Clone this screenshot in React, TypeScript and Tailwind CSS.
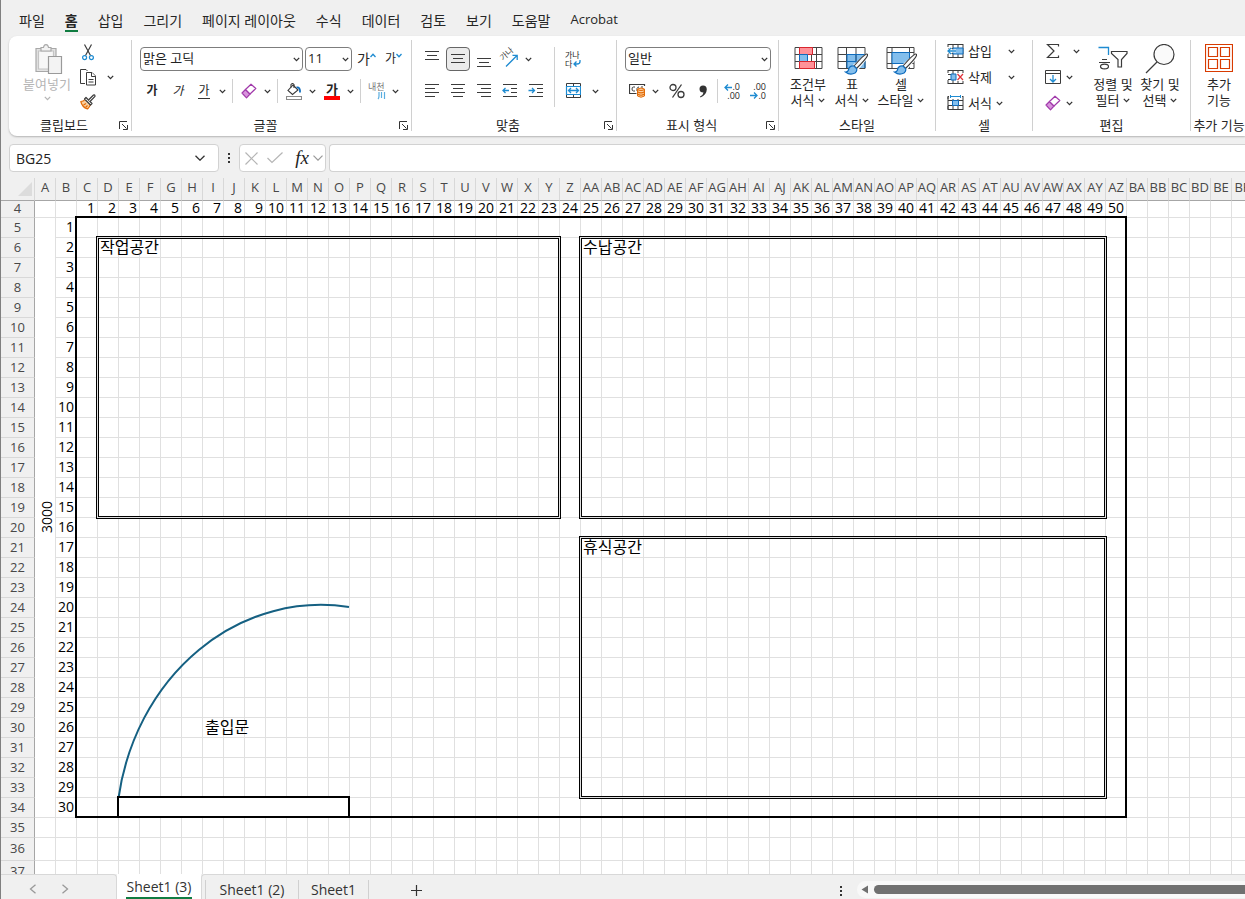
import React from "react";

type Kids = { children?: React.ReactNode };

const INK = "#3b3b3b";
const BLUE = "#1e8bd1";

function Chevron({ className = "text-[#333]" }: { className?: string }) {
  return (
    <svg width="7" height="5" viewBox="0 0 7 5" className={"shrink-0 " + className} fill="none" stroke="currentColor" strokeWidth="1.3">
      <path d="M0.8 0.9 3.5 3.6 6.2 0.9" />
    </svg>
  );
}

function More({ label }: { label: string }) {
  return (
    <button aria-label={label} className="flex h-6 w-3 shrink-0 items-center justify-center">
      <Chevron />
    </button>
  );
}

function Tool({ label, active, children }: Kids & { label: string; active?: boolean }) {
  return (
    <button
      aria-label={label}
      className={
        active
          ? "flex h-6 w-6 shrink-0 items-center justify-center rounded border border-[#666] bg-[#ebebeb]"
          : "flex h-6 w-6 shrink-0 items-center justify-center"
      }
    >
      {children}
    </button>
  );
}

function Rule() {
  return <span className="mx-1 h-6 w-px shrink-0 bg-[#d0d0d0]" />;
}

function Group({ title, launcher, className, children }: Kids & { title: string; launcher?: boolean; className: string }) {
  return (
    <section className={"flex shrink-0 flex-col border-r border-[#d0d0d0] " + className}>
      <div className="flex flex-1">{children}</div>
      <div className="flex h-3 items-center">
        <h2 className="flex-1 text-center text-[13px] leading-3 whitespace-nowrap">{title}</h2>
        {launcher && (
          <button aria-label={title + " 설정"} className="mr-[3px] h-[9px] w-[9px]">
            <svg width="9" height="9" viewBox="0 0 9 9" fill="none" stroke="#333">
              <path d="M0.5 8V0.5H8M3 3l4.5 4.5M8.5 4v4.5H4" />
            </svg>
          </button>
        )}
      </div>
    </section>
  );
}

function BigButton({ icon, lines, className, more }: { icon: React.ReactNode; lines: string[]; className: string; more?: boolean }) {
  return (
    <button className={"flex flex-col items-center pt-1 text-[13px] leading-4 whitespace-nowrap " + className}>
      <span className="flex h-8 items-start justify-center">{icon}</span>
      <span>{lines[0]}</span>
      <span className="flex items-center gap-1">
        {lines[1]}
        {more && <Chevron />}
      </span>
    </button>
  );
}

function Lines({ rows }: { rows: [number, number, number][] }) {
  return (
    <svg width="16" height="16" viewBox="0 0 16 16" stroke={INK} strokeWidth="1">
      {rows.map(([x1, x2, y]) => (
        <path key={y} d={`M${x1} ${y + 0.5}H${x2}`} />
      ))}
    </svg>
  );
}

function Eraser() {
  return (
    <svg width="16" height="16" viewBox="0 0 16 16" fill="none" stroke="#a23bab" strokeWidth="1.2" strokeLinejoin="round">
      <path d="M1 10 4.5 6.5 9 11 5.5 14.8Z" fill="#d894dc" />
      <path d="M4.5 6.5 10 1.2 14.8 5.5 9 11Z" fill="#fff" />
    </svg>
  );
}

function Brush() {
  return (
    <>
      <path d="M30 8.500 L17 20 L20 23 L30.500 10Z" fill="#fff" stroke="#fff" strokeWidth="3" />
      <path d="M29.500 8 Q27 8.500 17 20 L19.500 22.500 Q29.500 12.500 30.500 9.500 Q30.800 7.800 29.500 8Z" fill="#fafafa" stroke={INK} strokeWidth="1.1" />
      <path d="M17 20Q12 19.500 11.500 24 Q11 26 8.500 26Q13 29.500 18 27Q20.500 25 19.500 22.500Z" fill="#83beec" stroke="#0f6cbd" strokeWidth="1.2" />
    </>
  );
}

function Cut() {
  return (
    <svg width="12" height="17" viewBox="0 0 12 17" fill="none" stroke={INK} strokeWidth="1.2">
      <path d="M2.500 0.500 8.500 11.500M9.500 0.500 3.500 11.500" />
      <circle cx="2.600" cy="13.600" r="2" stroke={BLUE} />
      <circle cx="9.400" cy="13.600" r="2" stroke={BLUE} />
    </svg>
  );
}

function Copy() {
  return (
    <svg width="16" height="17" viewBox="0 0 16 17" fill="#fff" stroke={INK} strokeWidth="1">
      <path d="M5 14.500H0.500V0.500H6L7.500 2" />
      <path d="M6.500 3.500H12L15.500 7V16H6.500Z" />
      <path d="M11.500 3.500V7.500H15.500M8.500 10.500h5M8.500 13h5" />
    </svg>
  );
}

function FormatBrush() {
  return (
    <svg width="16" height="16" viewBox="0 0 16 16" fill="none" strokeWidth="1.2" strokeLinejoin="round">
      <path d="M5 5.500 Q3.500 7.500 0.800 7.500 Q2 13 7.500 15 Q9.500 13 10.500 10.500" fill="#fbd0a0" stroke="#e36c09" />
      <path d="M3.500 11 6 9.500M5.500 13.500l2-2" stroke="#e36c09" />
      <path d="M6 3.500 12 9.500 10.500 11 4.500 5Z" fill="#fff" stroke={INK} />
      <path d="M8.500 6 13.500 1Q15 0.500 15 2.300L10 7.500" fill="#fff" stroke={INK} />
    </svg>
  );
}

function Paste() {
  return (
    <svg width="28" height="31" viewBox="0 0 28 31" strokeWidth="1.200">
      <path d="M1 4.500H21V27.500H1Z" fill="#e3e3e3" stroke="#a8a8a8" />
      <path d="M3.500 7H18.500V25H3.500Z" fill="#f7f7f7" stroke="#c4c4c4" />
      <path d="M6 7V3.500H8.500Q9 0.600 11 0.600T13.500 3.500H16V7Z" fill="#f3f3f3" stroke="#a8a8a8" />
      <path d="M13.500 12.500H26.500V29.500H13.500Z" fill="#f3f3f3" stroke="#9a9a9a" />
    </svg>
  );
}

function Bucket() {
  return (
    <svg width="16" height="17" viewBox="0 0 16 17" fill="none" strokeWidth="1.100">
      <path d="M7 2 12 7 6.500 11.500 2 7.500Z" fill="#fff" stroke={INK} />
      <path d="M5 4.500V1.500Q6.500-0.500 8 1.500V5" stroke={INK} />
      <path d="M10.500 4.500Q14.500 4 14 9.500" stroke="#0f6cbd" strokeWidth="1.800" />
      <path d="M0.500 13.500H15.500V16.500H0.500Z" fill="#fff" stroke="#8a8a8a" />
    </svg>
  );
}

function Orientation() {
  return (
    <svg width="18" height="18" viewBox="0 0 18 18" fill="none" className="overflow-visible">
      <text x="0" y="0" transform="translate(2 11) rotate(-42)" fontSize="8" fill={INK}>가나</text>
      <path d="M5 16.500 16 5.500M11.500 5.300H16.200V10" stroke={BLUE} strokeWidth="1.300" />
    </svg>
  );
}

function Indent({ right }: { right?: boolean }) {
  return (
    <svg width="16" height="16" viewBox="0 0 16 16" fill="none">
      <path d="M1 1.500H15M9 5.500H15M9 9.500H15M1 13.500H15" stroke={INK} />
      <path d={right ? "M0.500 7.500H6.500M4 5 6.500 7.500 4 10" : "M7 7.500H1M3.500 5 1 7.500 3.500 10"} stroke={BLUE} strokeWidth="1.300" />
    </svg>
  );
}

function Merge() {
  return (
    <svg width="16" height="16" viewBox="0 0 16 16" fill="none">
      <path d="M1.500 0.500H15.500V14.500H1.500ZM8.500 0.500V3M8.500 12V14.500" stroke={INK} />
      <path d="M1.500 3.500H15.500V11.500H1.500Z" fill="#fff" stroke={BLUE} strokeWidth="1.200" />
      <path d="M4 7.500H13M6 5 3.500 7.500 6 10M11 5 13.500 7.500 11 10" stroke={BLUE} strokeWidth="1.300" />
    </svg>
  );
}

function Currency() {
  return (
    <svg width="17" height="16" viewBox="0 0 17 16" fill="none">
      <path d="M15.500 3V1.500H0.500V10.500H7.500" stroke={INK} strokeWidth="1.200" />
      <path d="M6 4H4.500Q3 4 3 6T4.500 8H6M8 8V5.500Q8.500 4 10 4M12 4H14" stroke={INK} />
      <path d="M8.500 6Q12 4 15.500 6V13Q12 15.500 8.500 13Z" fill="#fbd0a0" stroke="#e36c09" />
      <path d="M8.500 6.500Q12 8.500 15.500 6.500M8.500 8.800Q12 11 15.500 8.800M8.500 11Q12 13.500 15.500 11" stroke="#e36c09" strokeWidth="1.100" />
    </svg>
  );
}

function Decimals({ less }: { less?: boolean }) {
  return (
    <span className="relative flex w-4 flex-col items-end text-[9px] leading-[9px]">
      <span>{less ? ".00" : ".0"}</span>
      <span>{less ? ".0" : ".00"}</span>
      <svg
        width="8"
        height="7"
        viewBox="0 0 8 7"
        fill="none"
        stroke={BLUE}
        strokeWidth="1.300"
        className={less ? "absolute bottom-px left-0" : "absolute top-0.5 left-0"}
      >
        <path d={less ? "M0 3.500H7M4 0.500 7 3.500 4 6.500" : "M8 3.500H1M4 0.500 1 3.500 4 6.500"} />
      </svg>
    </span>
  );
}

function Conditional() {
  return (
    <svg width="29" height="24" viewBox="0 0 29 24" fill="none">
      <path d="M1 1.500H28V22.500H1ZM1 8.500H28M1 15.500H28M6.500 1V22M22.500 1V22M17.500 1V22" stroke="#444" />
      <path d="M5.500 1.500H18.500V8.500H5.500Z" fill="#ff9299" stroke="#d8262e" />
      <path d="M5.500 8.500H13.500V15.500H5.500Z" fill="#83beec" stroke="#0f6cbd" />
      <path d="M5.500 15.500H20.500V22.500H5.500Z" fill="#ff9299" stroke="#d8262e" />
    </svg>
  );
}

function TableStyle() {
  return (
    <svg width="32" height="29" viewBox="0 0 32 29" fill="none">
      <path d="M10 8.500H28V22H10Z" fill="#83beec" />
      <path d="M1 1.500H28V22.500H1ZM1 8.500H28M1 15.500H28M9.500 1V22M19 1V22" stroke="#444" />
      <path d="M10 8.500H28M10 15.500H28M10 8V22M19 8V22M28 8V22" stroke="#0f6cbd" />
      <Brush />
    </svg>
  );
}

function CellStyle() {
  return (
    <svg width="32" height="29" viewBox="0 0 32 29" fill="none">
      <path d="M1 1.500H28V22.500H1ZM1 6.500H28M1 17.500H28M6 1V22M23.500 1V22" stroke="#444" />
      <path d="M6 6.500H23.500V17.500H6Z" fill="#83beec" stroke="#0f6cbd" />
      <Brush />
    </svg>
  );
}

function CellIcon({ kind }: { kind: "insert" | "delete" | "format" }) {
  return (
    <svg width="17" height="16" viewBox="0 0 17 16" fill="none">
      <path d="M1 1.500H16M1 14.500H16M1 1V4M16 1V15M1 11V15M6 1V15M11 1V15M1 5.500H16M1 10.500H16" stroke={INK} />
      {kind === "insert" && (
        <>
          <path d="M6 5H16V11H6Z" fill="#83beec" stroke="#0f6cbd" />
          <path d="M9 8H1M4 5 1 8 4 11" stroke="#fff" strokeWidth="3" />
          <path d="M9 8H1M4 5 1 8 4 11" stroke={BLUE} strokeWidth="1.300" />
        </>
      )}
      {kind === "delete" && (
        <>
          <path d="M9 4H17V12H9Z" fill="#fff" />
          <path d="M4 5H9V11H4Z" fill="#83beec" stroke="#0f6cbd" />
          <path d="M10.500 5 16 11M16 5 10.500 11" stroke="#e0323a" strokeWidth="1.200" />
        </>
      )}
      {kind === "format" && (
        <>
          <path d="M2 0H15V4H2Z" fill="#fff" />
          <path d="M5.500 5.500H11.500V10.500H5.500Z" fill="#83beec" stroke="#0f6cbd" />
          <path d="M3.500 1.500H13.500M3.500 0V3M13.500 0V3" stroke={BLUE} />
          <path d="M1 2V14" stroke={INK} />
        </>
      )}
    </svg>
  );
}

function CellCommand({ kind, label, wide }: { kind: "insert" | "delete" | "format"; label: string; wide?: boolean }) {
  return (
    <button className="flex h-[22px] items-center text-[13px] leading-4">
      <CellIcon kind={kind} />
      <span className="ml-1 whitespace-nowrap">{label}</span>
      <Chevron className={wide ? "ml-4 text-[#333]" : "ml-1 text-[#333]"} />
    </button>
  );
}

function Picker({ label, value, className }: { label: string; value: string; className: string }) {
  return (
    <div className={"relative flex h-6 items-center " + className}>
      <select
        aria-label={label}
        defaultValue={value}
        className="h-6 w-full appearance-none rounded border border-[#7d7d7d] bg-white pb-0.5 pl-0.5 text-[13px] leading-5 text-[#222]"
      >
        <option>{value}</option>
      </select>
      <span className="pointer-events-none absolute right-[3px] flex">
        <Chevron />
      </span>
    </div>
  );
}

const menu = ["파일", "홈", "삽입", "그리기", "페이지 레이아웃", "수식", "데이터", "검토", "보기", "도움말", "Acrobat"];

function Menu() {
  return (
    <nav className="flex h-9 shrink-0 items-center gap-5 pt-1 pl-[18px] text-[14px] whitespace-nowrap">
      {menu.map((name) => (
        <a
          key={name}
          href="#"
          className={
            name === "홈"
              ? "flex h-6 items-center border-b-2 border-[#107c41] pt-0.5 font-bold"
              : name === "Acrobat"
                ? "flex h-6 items-center text-[13px]"
                : "flex h-6 items-center"
          }
        >
          {name}
        </a>
      ))}
    </nav>
  );
}

function Ribbon() {
  return (
    <div className="ml-2 flex h-[100px] shrink-0 overflow-hidden rounded-l-lg bg-white pt-1 pb-[5px] shadow-[0_1px_2px_rgba(0,0,0,0.25)]">
      <Group title="클립보드" launcher className="w-[123px]">
        <button className="ml-[11px] flex w-[54px] flex-col items-center pt-1 text-[13px] leading-4 whitespace-nowrap text-[#b5b5b5]">
          <span className="flex h-8 pl-1"><Paste /></span>
          붙여넣기
          <span className="flex h-3 items-center"><Chevron className="text-[#b5b5b5]" /></span>
        </button>
        <div className="ml-0.5 flex flex-col gap-px">
          <Tool label="잘라내기"><Cut /></Tool>
          <div className="flex gap-1">
            <Tool label="복사"><Copy /></Tool>
            <More label="복사 옵션" />
          </div>
          <Tool label="서식 복사"><FormatBrush /></Tool>
        </div>
      </Group>

      <Group title="글꼴" launcher className="w-[280px]">
        <div className="flex flex-col gap-2 pt-[7px] pl-2">
          <div className="flex">
            <Picker label="글꼴" value="맑은 고딕" className="w-[163px]" />
            <Picker label="글꼴 크기" value="11" className="ml-0.5 w-[47px]" />
            <button aria-label="글꼴 크기 크게" className="ml-[5px] flex h-6 w-5 items-start pt-0.5 text-[14px] leading-5">
              가
              <svg width="6" height="5" viewBox="0 0 6 5" fill="none" stroke={BLUE} strokeWidth="1.300" className="mt-1"><path d="M0.500 4 3 1.300 5.500 4" /></svg>
            </button>
            <button aria-label="글꼴 크기 작게" className="ml-2 flex h-6 w-5 items-start pt-0.5 text-[12px] leading-5">
              가
              <svg width="6" height="5" viewBox="0 0 6 5" fill="none" stroke={BLUE} strokeWidth="1.300" className="mt-1"><path d="M0.500 1 3 3.700 5.500 1" /></svg>
            </button>
          </div>
          <div className="flex items-center">
            <Tool label="굵게"><span className="text-[12px] leading-4 font-bold">가</span></Tool>
            <span className="w-0.5" />
            <Tool label="기울임꼴"><span className="text-[12px] leading-4 italic">가</span></Tool>
            <span className="w-0.5" />
            <Tool label="밑줄"><span className="border-b border-[#333] text-[12px] leading-[14px]">가</span></Tool>
            <More label="밑줄 옵션" />
            <Rule />
            <Tool label="지우기"><Eraser /></Tool>
            <More label="지우기 옵션" />
            <Rule />
            <Tool label="채우기 색"><Bucket /></Tool>
            <More label="채우기 색 옵션" />
            <span className="w-0.5" />
            <Tool label="글꼴 색"><span className="flex w-4 justify-center border-b-4 border-[#ff0000] text-[13px] leading-[13px] font-bold">가</span></Tool>
            <More label="글꼴 색 옵션" />
            <Rule />
            <Tool label="윗주">
              <svg width="18" height="18" viewBox="0 0 18 18" fill="none" className="overflow-visible">
                <text x="0" y="8" fontSize="9" fill="#777">내천</text>
                <path d="M11 10v4q0 2-1 3M13.500 10v6M16.500 10v7" stroke="#5aaee0" strokeWidth="1.200" />
              </svg>
            </Tool>
            <More label="윗주 옵션" />
          </div>
        </div>
      </Group>

      <Group title="맞춤" launcher className="w-[205px]">
        <div className="flex pt-[7px] pl-2">
          <div className="flex flex-col gap-2">
            <div className="flex gap-0.5">
              <Tool label="위쪽 맞춤"><Lines rows={[[1, 15, 0], [3, 13, 4], [1, 15, 8]]} /></Tool>
              <Tool label="가운데 맞춤" active><Lines rows={[[1, 15, 3], [3, 13, 7], [1, 15, 11]]} /></Tool>
              <Tool label="아래쪽 맞춤"><Lines rows={[[1, 15, 7], [3, 13, 11], [1, 15, 15]]} /></Tool>
              <div className="flex">
                <Tool label="방향"><Orientation /></Tool>
                <More label="방향 옵션" />
              </div>
            </div>
            <div className="flex gap-0.5">
              <Tool label="왼쪽 맞춤"><Lines rows={[[1, 15, 1], [1, 11, 5], [1, 15, 9], [1, 11, 13]]} /></Tool>
              <Tool label="가로 가운데 맞춤"><Lines rows={[[1, 15, 1], [3, 13, 5], [1, 15, 9], [3, 13, 13]]} /></Tool>
              <Tool label="오른쪽 맞춤"><Lines rows={[[1, 15, 1], [5, 15, 5], [1, 15, 9], [5, 15, 13]]} /></Tool>
              <Tool label="내어쓰기"><Indent /></Tool>
              <Tool label="들여쓰기"><Indent right /></Tool>
            </div>
          </div>
          <span className="mx-1.5 h-[60px] w-px bg-[#d0d0d0]" />
          <div className="flex flex-col gap-2">
            <Tool label="자동 줄 바꿈">
              <span className="relative flex w-4 flex-col items-start text-[8px] leading-[9px]">
                <span className="whitespace-nowrap">가나</span>
                <span>다</span>
                <svg width="8" height="9" viewBox="0 0 8 9" fill="none" stroke={BLUE} strokeWidth="1.300" className="absolute right-0 bottom-0">
                  <path d="M7 1V2.500Q7 5 4 5H1M3.500 2.500 1 5 3.500 7.500" />
                </svg>
              </span>
            </Tool>
            <div className="flex gap-1">
              <Tool label="병합하고 가운데 맞춤"><Merge /></Tool>
              <More label="병합 옵션" />
            </div>
          </div>
        </div>
      </Group>

      <Group title="표시 형식" launcher className="w-[162px]">
        <div className="flex flex-col gap-2 pt-[7px] pl-2">
          <Picker label="표시 형식" value="일반" className="w-[146px]" />
          <div className="flex items-center">
            <Tool label="회계 표시 형식"><Currency /></Tool>
            <More label="회계 표시 형식 옵션" />
            <span className="w-1" />
            <Tool label="백분율">
              <svg width="16" height="16" viewBox="0 0 16 16" fill="none" stroke={INK} strokeWidth="1.300">
                <circle cx="4" cy="4.500" r="3" />
                <circle cx="12" cy="11.500" r="3" />
                <path d="M12.500 1.500 3.500 14.500" />
              </svg>
            </Tool>
            <span className="w-0.5" />
            <Tool label="쉼표">
              <svg width="8" height="13" viewBox="0 0 8 13" fill="#333">
                <path d="M4 0.500Q7.800 0.500 7.800 4.500Q7.500 10 1.500 12.500L1 11.500Q4.500 9.500 4.500 7.500Q0.500 7.500 0.500 4T4 0.500Z" />
              </svg>
            </Tool>
            <span className="mx-0.5 h-6 w-px bg-[#d0d0d0]" />
            <Tool label="자릿수 늘림"><Decimals /></Tool>
            <span className="w-0.5" />
            <Tool label="자릿수 줄임"><Decimals less /></Tool>
          </div>
        </div>
      </Group>

      <Group title="스타일" className="w-[157px]">
        <div className="flex items-start pl-[7px]">
          <BigButton icon={<span className="pt-0.5"><Conditional /></span>} lines={["조건부", "서식"]} className="w-11" more />
          <BigButton icon={<span className="pt-0.5 pl-0.5"><TableStyle /></span>} lines={["표", "서식"]} className="w-11" more />
          <BigButton icon={<span className="pt-0.5 pl-0.5"><CellStyle /></span>} lines={["셀", "스타일"]} className="w-[54px]" more />
        </div>
      </Group>

      <Group title="셀" className="w-[97px]">
        <div className="flex flex-col gap-1 pl-[11px]">
          <CellCommand kind="insert" label="삽입" wide />
          <CellCommand kind="delete" label="삭제" wide />
          <CellCommand kind="format" label="서식" />
        </div>
      </Group>

      <Group title="편집" className="w-[158px]">
        <div className="flex flex-col gap-1 pl-3">
          <button aria-label="합계" className="flex h-[22px] items-center gap-3">
            <svg width="16" height="16" viewBox="0 0 16 16" fill="none" stroke={INK} strokeWidth="1.200">
              <path d="M13.500 3.500V1.500H2.500L9 8 2.500 14.500H13.500V12.500" />
            </svg>
            <Chevron />
          </button>
          <button aria-label="채우기" className="flex h-[22px] items-center gap-[5px]">
            <svg width="16" height="15" viewBox="0 0 16 15" fill="none">
              <path d="M0.500 0.500H15.500V13.500H0.500ZM0.500 3.500H15.500" stroke={INK} />
              <path d="M8 5V12M5 9 8 12 11 9" stroke={BLUE} strokeWidth="1.300" />
            </svg>
            <Chevron />
          </button>
          <button aria-label="지우기" className="flex h-[22px] items-center gap-[5px]">
            <Eraser />
            <Chevron />
          </button>
        </div>
        <div className="ml-[11px] flex items-start gap-[3px]">
          <BigButton
            className="w-11"
            more
            lines={["정렬 및", "필터"]}
            icon={
              <svg width="30" height="28" viewBox="0 0 30 28" fill="none">
                <path d="M0.500 3.500H10.500V11" stroke={BLUE} strokeWidth="1.300" />
                <path d="M4 15.500H9M1 18.500H12" stroke={INK} strokeWidth="1.200" />
                <ellipse cx="6.500" cy="22.500" rx="4" ry="2.400" stroke={INK} strokeWidth="1.200" />
                <path d="M13.500 7.500H29V9.500L23.500 15.500V23H20V15.500L13.500 9.500Z" fill="#fff" stroke={INK} strokeWidth="1.200" />
              </svg>
            }
          />
          <BigButton
            className="w-11"
            more
            lines={["찾기 및", "선택"]}
            icon={
              <svg width="30" height="30" viewBox="0 0 30 30" fill="none" stroke={INK} strokeWidth="1.200">
                <circle cx="19" cy="10.500" r="10" fill="#fafafa" />
                <path d="M12 18 1 29" />
              </svg>
            }
          />
        </div>
      </Group>

      <section className="flex w-14 shrink-0 flex-col">
        <div className="flex flex-1 justify-center">
          <BigButton
            className="w-14"
            lines={["추가", "기능"]}
            icon={
              <svg width="28" height="28" viewBox="0 0 28 28" fill="none" stroke="#d83b01">
                <path d="M0.500 0.500H27.500V27.500H0.500ZM3.500 3.500H12.500V12.500H3.500ZM15.500 3.500H24.500V12.500H15.500ZM3.500 15.500H12.500V24.500H3.500ZM15.500 15.500H24.500V24.500H15.500Z" strokeWidth="1.200" />
              </svg>
            }
          />
        </div>
        <h2 className="h-3 text-center text-[13px] leading-3 whitespace-nowrap">추가 기능</h2>
      </section>
    </div>
  );
}

function FormulaBar() {
  return (
    <div className="flex h-[42px] shrink-0 items-center pt-0.5 pl-2">
      <div className="relative flex h-7 w-[210px] shrink-0 items-center">
        <input aria-label="이름 상자" defaultValue="BG25" className="h-7 w-full rounded border border-[#d2d2d2] bg-white pl-1.5 text-[14px] text-[#222]" />
        <svg width="10" height="6" viewBox="0 0 10 6" fill="none" stroke="#333" strokeWidth="1.300" className="absolute right-3.5">
          <path d="M0.500 0.700 5 5.200 9.500 0.700" />
        </svg>
      </div>
      <svg width="20" height="12" viewBox="0 0 20 12" fill="#333" className="shrink-0">
        <path d="M9 1h2v2H9zM9 5h2v2H9zM9 9h2v2H9z" />
      </svg>
      <div className="flex h-7 w-[87px] shrink-0 items-center rounded border border-[#d2d2d2] bg-white pl-[5px]">
        <button aria-label="취소" className="w-[22px]">
          <svg width="13" height="13" viewBox="0 0 13 13" fill="none" stroke="#b5b5b5" strokeWidth="1.200"><path d="M0.500 0.500 12.500 12.500M12.500 0.500 0.500 12.500" /></svg>
        </button>
        <button aria-label="입력" className="w-6">
          <svg width="16" height="12" viewBox="0 0 16 12" fill="none" stroke="#b5b5b5" strokeWidth="1.200"><path d="M0.500 6 5 10.500 15.500 0.500" /></svg>
        </button>
        <button aria-label="함수 삽입" className="w-[22px] font-[Liberation_Serif,serif] text-[19px] leading-5 text-[#222] italic">
          fx
        </button>
        <svg width="10" height="6" viewBox="0 0 10 6" fill="none" stroke="#999" strokeWidth="1.200"><path d="M0.500 0.700 5 5.200 9.500 0.700" /></svg>
      </div>
      <input aria-label="수식 입력줄" className="ml-[3px] h-7 min-w-0 flex-1 rounded-l border border-r-0 border-[#d2d2d2] bg-white px-2 text-[14px]" />
    </div>
  );
}

const COLUMN_COUNT = 58;

function columnName(i: number): string {
  const letter = String.fromCharCode(65 + (i % 26));
  return i < 26 ? letter : String.fromCharCode(64 + Math.floor(i / 26)) + letter;
}

const columns = Array.from({ length: COLUMN_COUNT }, (_, i) => columnName(i));
const rows = Array.from({ length: 34 }, (_, i) => i + 4);

const labels: Record<string, string> = { D6: "작업공간", AA6: "수납공간", AA21: "휴식공간", I30: "출입문" };

function rowHeight(row: number) {
  if (row === 4) return "h-[17px]";
  return row > 35 ? "h-[23px]" : "h-5";
}

function Cell({ row, col }: { row: number; col: number }) {
  const inner = "border-r border-b border-[#e0e0e0] p-0 pb-0.5 leading-[14px] ";
  if (row === 4 && col > 1 && col < 52) {
    return <td className={inner + "pr-0.5 text-right text-[14px]"}>{col - 1}</td>;
  }
  if (col === 1 && row > 4 && row < 35) {
    return <td className={inner + "pr-0.5 text-right text-[14px]"}>{row - 4}</td>;
  }
  const text = labels[columns[col] + row];
  return <td className={inner + "pl-0.5 text-[16px] whitespace-nowrap"}>{text}</td>;
}

function Sheet() {
  return (
    <main className="relative min-h-0 flex-1 overflow-hidden bg-white">
      <table className="w-[1252px] table-fixed border-separate border-spacing-0 text-black">
        <colgroup>
          <col className="w-[34px]" />
          {columns.map((c) => (
            <col key={c} className="w-[21px]" />
          ))}
        </colgroup>
        <thead>
          <tr className="h-[23px] bg-[#f0f0f0] text-[13px] leading-4 text-[#484848]">
            <th className="border-r border-b border-r-[#d8d8d8] border-b-[#a6a6a6] p-0">
              <svg width="14" height="14" viewBox="0 0 14 14" className="mr-0.5 ml-auto" fill="#dcdcdc">
                <path d="M14 0V14H0Z" />
              </svg>
            </th>
            {columns.map((c) => (
              <th key={c} className="border-r border-b border-r-[#d8d8d8] border-b-[#a6a6a6] p-0 pb-1 font-normal">
                <span className="-mx-1 flex justify-center">{c}</span>
              </th>
            ))}
          </tr>
        </thead>
        <tbody>
          {rows.map((row) => (
            <tr key={row} className={rowHeight(row)}>
              <th className="border-r border-b border-r-[#a6a6a6] border-b-[#d8d8d8] bg-[#f0f0f0] p-0 pb-0.5 text-[13px] leading-[14px] font-normal text-[#484848]">
                {row}
              </th>
              {columns.map((c, col) => {
                if (col > 0 || row < 5 || row > 34) return <Cell key={c} row={row} col={col} />;
                if (row > 5) return null;
                return (
                  <td key={c} rowSpan={30} className="border-r border-b border-[#e0e0e0] p-0 text-[14px] leading-4">
                    <span className="mr-0 ml-auto block rotate-180 text-center [writing-mode:vertical-rl]">3000</span>
                  </td>
                );
              })}
            </tr>
          ))}
        </tbody>
      </table>

      <div className="pointer-events-none absolute top-[38px] left-[74px] h-[602px] w-[1052px] border-2 border-black" />
      <div className="pointer-events-none absolute top-[58px] left-[95px] h-[283px] w-[465px] border-3 border-double border-black" />
      <div className="pointer-events-none absolute top-[58px] left-[578px] h-[283px] w-[528px] border-3 border-double border-black" />
      <div className="pointer-events-none absolute top-[358px] left-[578px] h-[263px] w-[528px] border-3 border-double border-black" />
      <svg width="236" height="200" viewBox="0 0 236 200" fill="none" className="pointer-events-none absolute top-[424px] left-[115px]">
        <path d="M2.500 196 A205 229 0 0 1 233 5" stroke="#156082" strokeWidth="2" />
      </svg>
      <div className="pointer-events-none absolute top-[618px] left-[116px] h-[22px] w-[233px] border-2 border-black bg-white" />
    </main>
  );
}

function SheetTabs() {
  return (
    <footer className="flex h-[25px] shrink-0 bg-[#f0f0f0] text-[14px] leading-5 whitespace-nowrap text-[#333]">
      <div className="flex w-[116px] shrink-0 items-center gap-6 rounded-tr border-t border-r border-[#d8d8d8] pt-1 pl-7 text-[#999]">
        <button aria-label="이전 시트">
          <svg width="8" height="10" viewBox="0 0 8 10" fill="none" stroke="currentColor" strokeWidth="1.300"><path d="M6.500 0.800 1.500 5 6.500 9.200" /></svg>
        </button>
        <button aria-label="다음 시트">
          <svg width="8" height="10" viewBox="0 0 8 10" fill="none" stroke="currentColor" strokeWidth="1.300"><path d="M1.500 0.800 6.500 5 1.500 9.200" /></svg>
        </button>
      </div>
      <div className="flex w-[84px] shrink-0 justify-center bg-white">
        <button className="border-b-2 border-[#107c41] px-px pt-[3px]">Sheet1 (3)</button>
      </div>
      <div className="flex min-w-0 flex-1 items-center rounded-tl border-t border-l border-[#d8d8d8] pt-1.5">
        <span className="ml-[3px] h-5 w-px bg-[#d0d0d0]" />
        <button className="w-[92px]">Sheet1 (2)</button>
        <span className="h-5 w-px bg-[#d0d0d0]" />
        <button className="w-[69px]">Sheet1</button>
        <span className="h-5 w-px bg-[#d0d0d0]" />
        <button aria-label="새 시트" className="ml-[42px]">
          <svg width="11" height="11" viewBox="0 0 11 11" stroke="#333" strokeWidth="1.200"><path d="M5.500 0V11M0 5.500H11" /></svg>
        </button>
      </div>
      <div className="flex w-[410px] shrink-0 items-center border-t border-[#d8d8d8] pt-1">
        <svg width="12" height="11" viewBox="0 0 12 11" fill="#333" className="mt-1">
          <path d="M5 0h2v2H5zM5 4h2v2H5zM5 8h2v2H5z" />
        </svg>
        <div className="ml-2.5 flex h-[17px] flex-1 items-center gap-[5px] rounded-l-full bg-[#f8f8f8] pl-1">
          <svg width="8" height="9" viewBox="0 0 8 9" fill="#707070"><path d="M7 0.500V8.500L0.500 4.500Z" /></svg>
          <span className="h-[9px] flex-1 rounded-l-full bg-[#707070]" />
        </div>
      </div>
    </footer>
  );
}

export default function App() {
  return (
    <div className="flex h-screen flex-col overflow-hidden border-l border-[#808080] bg-[#f0f0f0] font-['Open_Sans','Noto_Sans_CJK_KR',sans-serif] text-[#262626]">
      <Menu />
      <Ribbon />
      <FormulaBar />
      <Sheet />
      <SheetTabs />
    </div>
  );
}
